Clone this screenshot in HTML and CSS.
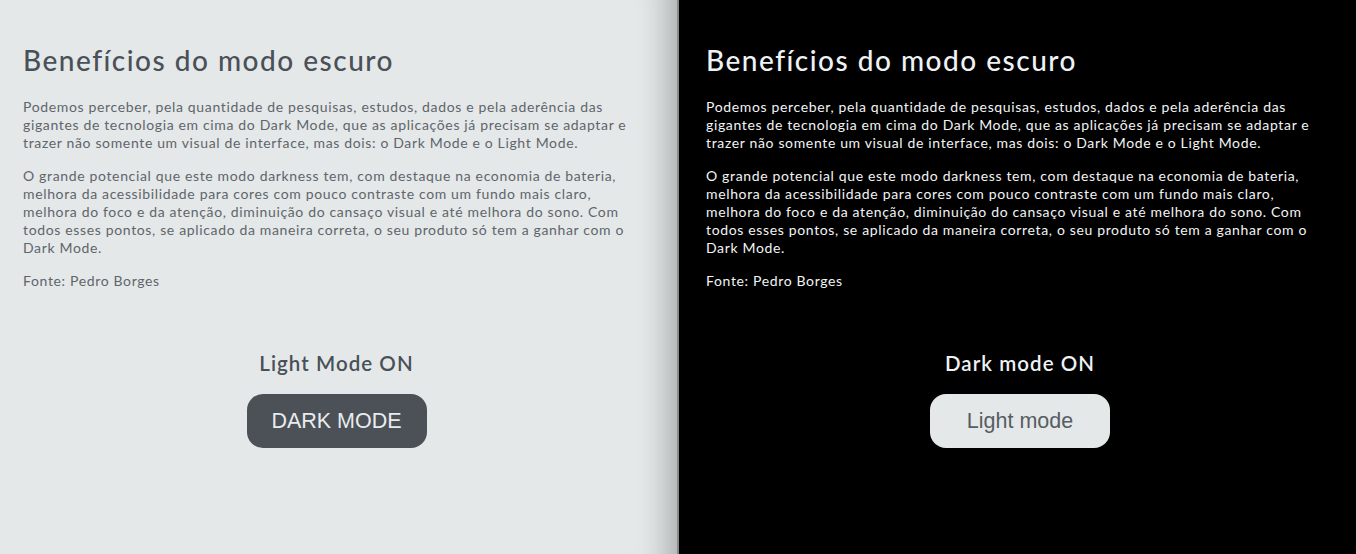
FILE: index.html
```html
<!DOCTYPE html>
<html lang="pt-BR">
<head>
<meta charset="utf-8">
<title>Modo escuro</title>
<link rel="stylesheet" href="styles.css">
</head>
<body>
<main class="split">
  <section class="panel panel-light">
    <article class="content">
      <h1 class="title">Benefícios do modo escuro</h1>
      <p class="text">Podemos perceber, pela quantidade de pesquisas, estudos, dados e pela aderência das gigantes de tecnologia em cima do Dark Mode, que as aplicações já precisam se adaptar e trazer não somente um visual de interface, mas dois: o Dark Mode e o Light Mode.</p>
      <p class="text">O grande potencial que este modo darkness tem, com destaque na economia de bateria, melhora da acessibilidade para cores com pouco contraste com um fundo mais claro, melhora do foco e da atenção, diminuição do cansaço visual e até melhora do sono. Com todos esses pontos, se aplicado da maneira correta, o seu produto só tem a ganhar com o Dark Mode.</p>
      <p class="text">Fonte: Pedro Borges</p>
    </article>
    <div class="toggle">
      <h2 class="status">Light Mode ON</h2>
      <button class="btn btn-dark">DARK MODE</button>
    </div>
  </section>
  <section class="panel panel-dark">
    <article class="content">
      <h1 class="title">Benefícios do modo escuro</h1>
      <p class="text">Podemos perceber, pela quantidade de pesquisas, estudos, dados e pela aderência das gigantes de tecnologia em cima do Dark Mode, que as aplicações já precisam se adaptar e trazer não somente um visual de interface, mas dois: o Dark Mode e o Light Mode.</p>
      <p class="text">O grande potencial que este modo darkness tem, com destaque na economia de bateria, melhora da acessibilidade para cores com pouco contraste com um fundo mais claro, melhora do foco e da atenção, diminuição do cansaço visual e até melhora do sono. Com todos esses pontos, se aplicado da maneira correta, o seu produto só tem a ganhar com o Dark Mode.</p>
      <p class="text">Fonte: Pedro Borges</p>
    </article>
    <div class="toggle">
      <h2 class="status">Dark mode ON</h2>
      <button class="btn btn-light">Light mode</button>
    </div>
  </section>
</main>
</body>
</html>
```
FILE: styles.css
```css
* { box-sizing: border-box; }
html, body { margin: 0; padding: 0; }
body {
  font-family: Lato, "Noto Sans", sans-serif;
  height: 554px;
  overflow: hidden;
}
.split {
  display: flex;
  height: 554px;
}
.panel {
  display: flex;
  flex-direction: column;
  align-items: stretch;
}
.panel-light {
  background: #e4e8e9;
  color: #5f656b;
  flex: 0 0 679px;
  padding: 0 27px 0 23px;
  box-shadow: inset -40px 0 30px -30px rgba(0,0,0,0.25);
  border-right: 2px solid #8a8a8a;
}
.panel-dark {
  background: #000;
  color: #f2f4f5;
  flex: 1 1 auto;
  padding: 0 22px 0 27px;
}
.content {
  padding-top: 40px;
  width: 613px;
}
.title {
  font-size: 28px;
  font-weight: 500;
  letter-spacing: 1.5px;
  margin: 0 0 18px;
  line-height: 40px;
}
.panel-light .title { color: #4a5057; }
.panel-dark .title { color: #eef2f4; }
.text {
  font-size: 14px;
  line-height: 18px;
  letter-spacing: 0.65px;
  margin: 0 0 15px;
}
.toggle {
  display: flex;
  flex-direction: column;
  align-items: center;
  margin-top: 44px;
}
.status {
  font-size: 20.5px;
  font-weight: 600;
  letter-spacing: 1.05px;
  margin: 0 0 17px;
  line-height: 28px;
}
.panel-light .status { color: #4a5057; }
.panel-dark .status { color: #eef2f4; }
.btn {
  width: 180px;
  height: 54px;
  border: none;
  border-radius: 16px;
  font-family: "Liberation Sans", Arial, sans-serif;
  font-size: 21.5px;
}
.btn-dark { background: #4c5158; color: #e8ecee; }
.btn-light { background: #e4e8e9; color: #575d64; }
```
